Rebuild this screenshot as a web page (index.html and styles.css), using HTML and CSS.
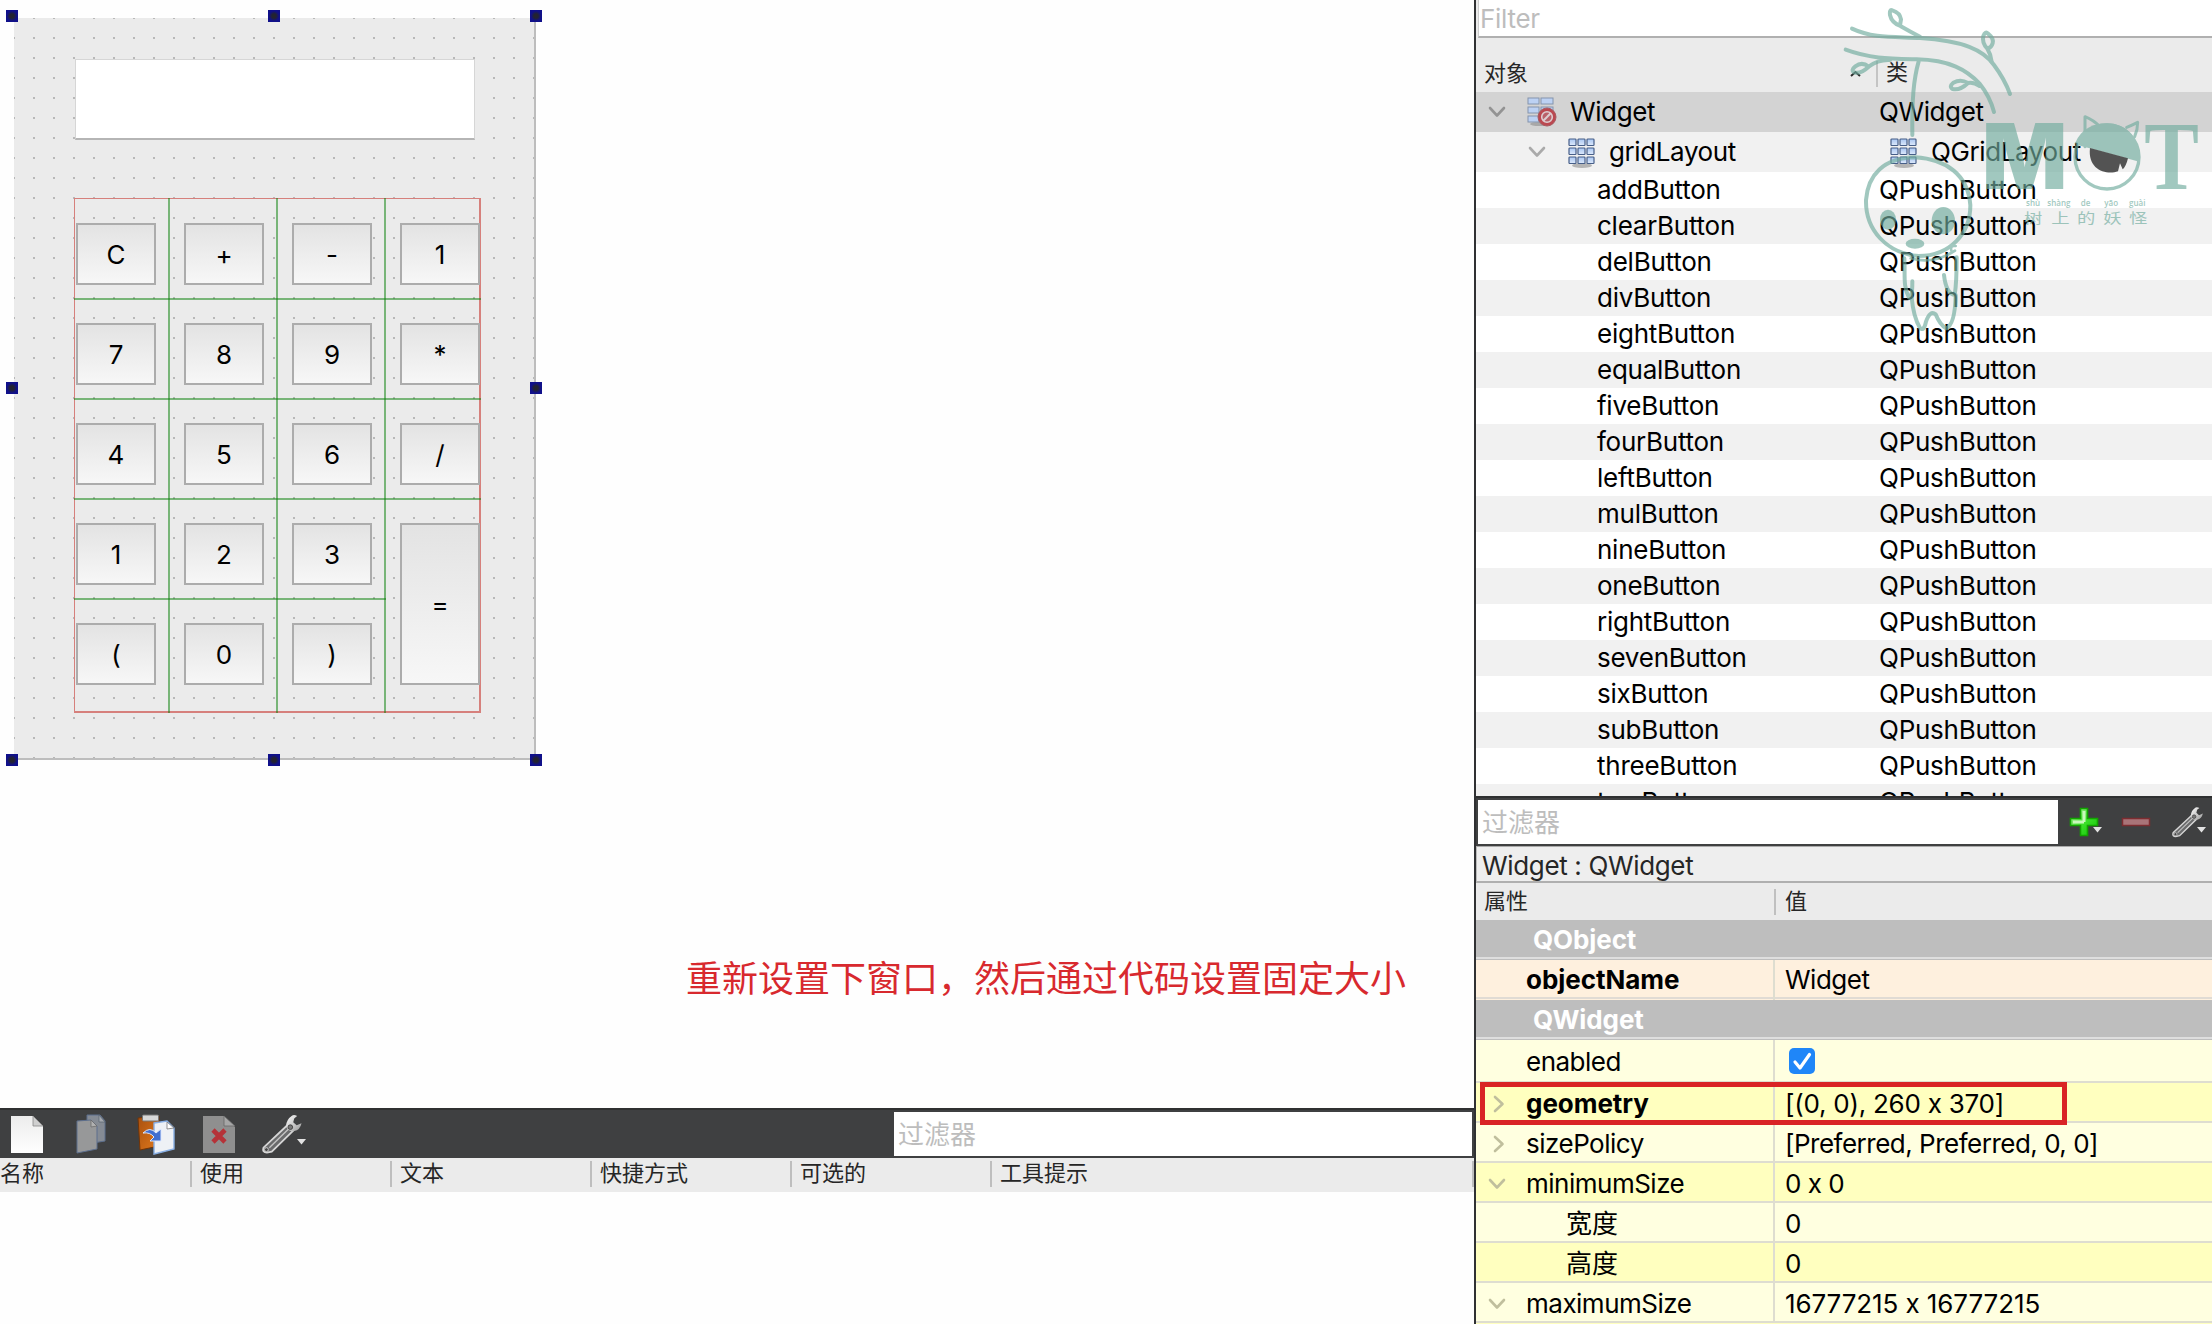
FILE: index.html
```html
<!DOCTYPE html>
<html lang="zh-CN">
<head>
<meta charset="utf-8">
<title>Qt Designer</title>
<link rel="stylesheet" href="styles.css">
</head>
<body>
<svg class="defs" width="0" height="0" aria-hidden="true">
  <defs>
    <linearGradient id="cell" x1="0" y1="0" x2="0" y2="1"><stop offset="0" stop-color="#a9c6f2"/><stop offset="1" stop-color="#dde9fa"/></linearGradient>
    <linearGradient id="steel" x1="0" y1="0" x2="1" y2="1"><stop offset="0" stop-color="#fff"/><stop offset="1" stop-color="#9a9a9a"/></linearGradient>
    <linearGradient id="paper" x1="0" y1="0" x2="0" y2="1"><stop offset="0" stop-color="#ececec"/><stop offset="1" stop-color="#fff"/></linearGradient>
    <linearGradient id="green" x1="0" y1="0" x2="1" y2="1"><stop offset="0" stop-color="#baf5a8"/><stop offset=".5" stop-color="#3fe02c"/><stop offset="1" stop-color="#0cc400"/></linearGradient>
    <linearGradient id="board" x1="0" y1="0" x2="1" y2="1"><stop offset="0" stop-color="#a8500f"/><stop offset="1" stop-color="#e0791c"/></linearGradient>
    <symbol id="grid" viewBox="0 0 28 31">
      <ellipse cx="14" cy="27.5" rx="10" ry="2.5" fill="#000" opacity=".25"/>
      <g fill="url(#cell)" stroke="#465e88" stroke-width="1.200">
        <rect x="1" y="1" width="7" height="6.5" rx=".8"/><rect x="10" y="1" width="7" height="6.5" rx=".8"/><rect x="19" y="1" width="7" height="6.5" rx=".8"/>
        <rect x="1" y="10" width="7" height="6.5" rx=".8"/><rect x="10" y="10" width="7" height="6.5" rx=".8"/><rect x="19" y="10" width="7" height="6.5" rx=".8"/>
        <rect x="1" y="19" width="7" height="6.5" rx=".8"/><rect x="10" y="19" width="7" height="6.5" rx=".8"/><rect x="19" y="19" width="7" height="6.5" rx=".8"/>
      </g>
    </symbol>
    <symbol id="down" viewBox="0 0 18 12"><path d="M2 2l7 7.5L16 2" fill="none" stroke="currentColor" stroke-width="2.6" stroke-linecap="round" stroke-linejoin="round"/></symbol>
    <symbol id="right" viewBox="0 0 12 18"><path d="M2 2l7.5 7L2 16" fill="none" stroke="currentColor" stroke-width="2.6" stroke-linecap="round" stroke-linejoin="round"/></symbol>
    <symbol id="wrench" viewBox="0 0 42 40">
      <path d="M27 10L1.500 34Q0 39 5 39L10 38L32 16.500Z" fill="#6a6b6c" stroke="#d6d6d6" stroke-width="1.8"/>
      <path d="M7.500 34L28.500 13.500" stroke="#c4c4c4" stroke-width="1.4"/>
      <path d="M31 1Q25 5 24.500 12Q27 18 33 17Q39 16 40.500 9L35.500 11L32 8L33 4L36 1.500Q33 0 31 1Z" fill="url(#steel)"/>
      <circle cx="29" cy="13" r="2.400" fill="#777" stroke="#333" stroke-width=".8"/><circle cx="4.500" cy="36" r="2" fill="#444" stroke="#ccc"/>
    </symbol>
  </defs>
</svg>
<div class="app">
  <main class="left">
    <section class="canvas">
      <div class="form">
        <div class="display"></div>
        <div class="keys">
          <i class="v v1"></i><i class="v v2"></i><i class="v v3"></i>
          <i class="h h1"></i><i class="h h2"></i><i class="h h3"></i><i class="h h4"></i>
          <button>C</button><button>+</button><button>-</button><button>1</button>
          <button>7</button><button>8</button><button>9</button><button>*</button>
          <button>4</button><button>5</button><button>6</button><button>/</button>
          <button>1</button><button>2</button><button>3</button><button class="tall">=</button>
          <button>(</button><button>0</button><button>)</button>
        </div>
      </div>
      <b class="handle x0 y0"></b><b class="handle x1 y0"></b><b class="handle x2 y0"></b>
      <b class="handle x0 y1"></b><b class="handle x2 y1"></b>
      <b class="handle x0 y2"></b><b class="handle x1 y2"></b><b class="handle x2 y2"></b>
      <p class="note">重新设置下窗口，然后通过代码设置固定大小</p>
    </section>
    <div class="toolbar">
      <svg class="tools" width="320" height="48" viewBox="0 0 320 48">
        <path d="M11 6H33L43 16V43H11Z" fill="url(#paper)"/><path d="M33 6V16H43Z" fill="#cfcfcf" stroke="#888" stroke-width=".8"/>
        <g><path d="M87 5H100L105 11V31L87 34Z" fill="#858b94" stroke="#5d6f8d"/><path d="M99 5V12H105Z" fill="#a5a9af" stroke="#5a6470" stroke-width=".7"/>
        <path d="M77 11L91 10L97 16V39L77 43Z" fill="#979899" stroke="#5d6f8d"/><path d="M91 10V17L97 16Z" fill="#b0b0b0" stroke="#666" stroke-width=".7"/></g>
        <g><path d="M138 8L159 6V36L140 40Z" fill="url(#board)" stroke="#713407"/><rect x="142.500" y="5" width="16" height="6" rx="1" fill="#d8d8d8" stroke="#777"/>
        <path d="M154 13L167 11L174 18V39L154 44Z" fill="#eef1f5" stroke="#88afe4" stroke-width="1.400"/><path d="M167 12V19L174 18Z" fill="#fff" stroke="#777" stroke-width=".8"/>
        <path d="M143 23Q150 16 156 23L161 19V31H150L154 27Q150 22 143 23Z" fill="#416fd0" stroke="#dce8ff" stroke-width="1"/></g>
        <path d="M203 6H224L235 17V43H203Z" fill="#8f8f8f"/><path d="M224 6V16H235Z" fill="#a6a6a6" stroke="#676767" stroke-width=".8"/>
        <path d="M213 20L225 32M225 20L213 32" stroke="#b53238" stroke-width="4.600"/>
        <use href="#wrench" x="262" y="4" width="41" height="40"/>
        <path d="M297 29H306L301.500 34.500Z" fill="#e2e2e2"/>
      </svg>
      <div class="search">过滤器</div>
    </div>
    <div class="cols"><span>名称</span><span>使用</span><span>文本</span><span>快捷方式</span><span>可选的</span><span>工具提示</span></div>
  </main>
  <aside class="right">
    <div class="filter">Filter</div>
    <div class="objhead"><span class="c1">对象<svg class="sort" width="11" height="7" viewBox="0 0 11 7"><path d="M1 6L5.500 2L10 6" fill="none" stroke="#2b2b2b" stroke-width="2"/></svg></span><span class="c2">类</span></div>
    <div class="tree">
      <div class="row big sel"><svg class="arrow a0" width="18" height="12"><use href="#down"/></svg>
        <svg class="wicon" width="30" height="32" viewBox="0 0 30 32"><ellipse cx="12" cy="28" rx="9" ry="2" fill="#000" opacity=".2"/><g fill="#bcd1f3" stroke="#8494ad"><rect x="1" y="2" width="11" height="6"/><rect x="14" y="2" width="12" height="6"/><rect x="1" y="11" width="11" height="6"/><rect x="1" y="20" width="11" height="6"/><rect x="14" y="11" width="12" height="6"/></g><circle cx="20" cy="21" r="9" fill="#bb4850" stroke="#a85a60"/><circle cx="20" cy="21" r="5.300" fill="#b96068" stroke="#dccdd0" stroke-width="1.600"/><path d="M16.300 24.700L23.700 17.300" stroke="#dccdd0" stroke-width="2"/></svg>
        <span class="n">Widget</span><span class="k">QWidget</span></div>
      <div class="row big"><svg class="arrow a1" width="18" height="12"><use href="#down"/></svg><svg class="gicon" width="28" height="31"><use href="#grid"/></svg><span class="n g">gridLayout</span><svg class="gicon2" width="28" height="31"><use href="#grid"/></svg><span class="k g">QGridLayout</span></div>
      <div class="row"><span class="n">addButton</span><span class="k">QPushButton</span></div>
      <div class="row"><span class="n">clearButton</span><span class="k">QPushButton</span></div>
      <div class="row"><span class="n">delButton</span><span class="k">QPushButton</span></div>
      <div class="row"><span class="n">divButton</span><span class="k">QPushButton</span></div>
      <div class="row"><span class="n">eightButton</span><span class="k">QPushButton</span></div>
      <div class="row"><span class="n">equalButton</span><span class="k">QPushButton</span></div>
      <div class="row"><span class="n">fiveButton</span><span class="k">QPushButton</span></div>
      <div class="row"><span class="n">fourButton</span><span class="k">QPushButton</span></div>
      <div class="row"><span class="n">leftButton</span><span class="k">QPushButton</span></div>
      <div class="row"><span class="n">mulButton</span><span class="k">QPushButton</span></div>
      <div class="row"><span class="n">nineButton</span><span class="k">QPushButton</span></div>
      <div class="row"><span class="n">oneButton</span><span class="k">QPushButton</span></div>
      <div class="row"><span class="n">rightButton</span><span class="k">QPushButton</span></div>
      <div class="row"><span class="n">sevenButton</span><span class="k">QPushButton</span></div>
      <div class="row"><span class="n">sixButton</span><span class="k">QPushButton</span></div>
      <div class="row"><span class="n">subButton</span><span class="k">QPushButton</span></div>
      <div class="row"><span class="n">threeButton</span><span class="k">QPushButton</span></div>
      <div class="row"><span class="n">twoButton</span><span class="k">QPushButton</span></div>
    </div>
    <div class="toolbar">
      <div class="search">过滤器</div>
      <svg class="tools" width="154" height="48" viewBox="0 0 154 48">
        <path d="M22.500 10.500H29.500V20.500H39.500V27.500H29.500V37.500H22.500V27.500H12.500V20.500H22.500Z" fill="url(#green)" stroke="#12a500" stroke-width="1.600"/>
        <path d="M26 13V24M15 24H26" stroke="#c9f8bb" stroke-width="3"/>
        <path d="M35 29H44L39.500 34.500Z" fill="#e2e2e2"/>
        <rect x="64.500" y="20.500" width="27" height="7" fill="#a97478" stroke="#7d2d31" stroke-width="1.500"/>
        <use href="#wrench" x="114" y="8" width="32" height="32"/>
        <path d="M139 29H148L143.500 34.500Z" fill="#e2e2e2"/>
      </svg>
    </div>
    <div class="title">Widget : QWidget</div>
    <div class="prophead"><span class="p">属性</span><span class="q">值</span></div>
    <div class="props">
      <div class="prop group">QObject</div>
      <div class="prop peach"><span class="p bold">objectName</span><span class="q">Widget</span></div>
      <div class="prop group">QWidget</div>
      <div class="prop light first"><span class="p">enabled</span><span class="q"><svg class="check" width="26" height="26" viewBox="0 0 26 26"><rect width="26" height="26" rx="5" fill="#1f86f8"/><path d="M6 14L11 20L20.500 6.500" fill="none" stroke="#fff" stroke-width="3.200" stroke-linecap="round" stroke-linejoin="round"/></svg></span></div>
      <div class="prop deep"><svg class="tw r" width="12" height="18"><use href="#right"/></svg><span class="p bold">geometry</span><span class="q rect">[(0, 0), 260 x 370]</span><div class="mark"></div></div>
      <div class="prop light"><svg class="tw r" width="12" height="18"><use href="#right"/></svg><span class="p">sizePolicy</span><span class="q">[Preferred, Preferred, 0, 0]</span></div>
      <div class="prop deep"><svg class="tw" width="18" height="12"><use href="#down"/></svg><span class="p">minimumSize</span><span class="q">0 x 0</span></div>
      <div class="prop light"><span class="p sub">宽度</span><span class="q">0</span></div>
      <div class="prop deep"><span class="p sub">高度</span><span class="q">0</span></div>
      <div class="prop light"><svg class="tw" width="18" height="12"><use href="#down"/></svg><span class="p">maximumSize</span><span class="q num">16777215 x 16777215</span></div>
      <div class="prop deep"></div>
    </div>
  </aside>
  <svg class="watermark" width="372" height="360" viewBox="0 0 1116 1080">
    <g fill="none" stroke="#70ac9e" stroke-width="12" stroke-linecap="round" stroke-linejoin="round">
      <path d="M36 86C100 116 160 110 240 114C370 122 430 150 462 195Q494 238 510 282"/>
      <path d="M17 149C90 176 150 176 230 178C330 180 380 210 418 250Q450 290 462 336"/>
      <path d="M240 110Q210 95 181 78Q155 68 150 45Q148 27 157 31Q180 38 183 58L180 76"/>
      <path d="M455 185Q452 162 442 146Q425 128 430 108Q436 92 444 101Q462 115 458 130Q454 144 443 146"/>
      <path d="M418 258Q402 246 384 249Q360 272 338 267Q326 260 340 248Q362 236 384 249"/>
      <path d="M150 180Q115 178 86 200Q60 224 42 217Q32 210 46 199Q66 184 86 200"/>
      <path d="M236 184C220 240 216 300 217 405"/>
      <path d="M225 472C130 474 84 525 78 600C76 690 140 760 236 768C330 768 392 700 391 615C384 525 320 478 225 472Z"/>
      <path d="M193 775C196 820 188 860 207 893Q217 900 217 844M215 892Q220 950 240 984Q252 995 258 965Q270 930 287 943Q300 975 318 985Q345 975 347 885M350 772Q350 850 344 885Q318 880 312 825"/>
      <path d="M212 775Q280 795 345 752M347 738Q330 735 334 752" stroke-width="8"/>
      <path d="M735 440L735 350Q760 360 780 380M860 382Q875 376 893 367Q893 390 884 410" stroke-width="9"/>
      <circle cx="801" cy="471" r="96" stroke-width="10"/>
    </g>
    <g fill="#70ac9e">
      <ellipse cx="144" cy="659" rx="24" ry="30"/><ellipse cx="310" cy="662" rx="35" ry="41"/><ellipse cx="225" cy="731" rx="28" ry="15"/>
      <path d="M705 430C725 385 760 370 801 370C862 370 904 420 898 485L710 434Z"/>
      <text class="logo" x="426" y="568" font-size="274" textLength="256" lengthAdjust="spacingAndGlyphs">M</text>
      <text class="logo serif" x="913" y="568" font-size="294" textLength="164" lengthAdjust="spacingAndGlyphs">T</text>
      <g class="py"><text x="558" y="618">shù</text><text x="622" y="618">shàng</text><text x="722" y="618">de</text><text x="793" y="618">yāo</text><text x="867" y="618">guài</text></g>
      <g class="hz" transform="translate(0 668) scale(1 .76)"><text x="552">树</text><text x="634">上</text><text x="711">的</text><text x="790">妖</text><text x="867">怪</text></g>
    </g>
    <path d="M750 444L864 475Q858 500 848 508L840 490L834 514C800 526 742 510 750 444Z" fill="#000"/>
  </svg>
</div>
</body>
</html>
```
FILE: styles.css
```css
* { box-sizing: border-box; }
body { margin: 0; background: #fefefe; overflow: hidden; font: 26px/36px Inter, "Noto Sans CJK SC", sans-serif; font-feature-settings: "calt" 0; letter-spacing: -.5px; color: #000; }
.defs { display: block; width: 0; height: 0; }
.app { position: relative; width: 2212px; height: 1324px; display: grid; grid-template-columns: 1474px 738px; overflow: hidden; }

/* design canvas */
.left { display: flex; flex-direction: column; min-width: 0; }
.canvas { position: relative; height: 1108px; }
.form { position: absolute; left: 14px; top: 18px; width: 522px; height: 742px; padding: 41px 0 0 60px; border: solid #bdbdbd; border-width: 0 2px 2px 0; background-color: #ebebeb; background-image: conic-gradient(from 270deg at 2px 2px, #b8b8b8 90deg, transparent 0); background-size: 20px 20px; background-position: -1px -1px; }
.display { width: 400px; height: 81px; margin-left: 1px; border: 1px solid #d6d6d6; border-bottom: 2px solid #b5b5b5; background: #fff; }
.keys { position: relative; width: 407px; height: 515px; margin-top: 58px; padding: 24px 0 0 1px; border: 1px solid #d6807c; border-right-width: 2px; border-bottom-width: 2px; display: grid; grid-template-columns: repeat(4, 80px); grid-auto-rows: 62px; gap: 38px 28px; }
.keys button { position: relative; border: 2px solid #acacac; background: linear-gradient(#e3e3e3, #f7f7f7); font: inherit; color: #000; padding: 2px 0 0; text-align: center; letter-spacing: 0; }
.keys .tall { grid-row: 4 / 6; grid-column: 4; height: 162px; }
.v, .h { position: absolute; background: rgba(5, 128, 5, .5); }
.v { width: 2px; top: -1px; height: 515px; }
.h { height: 2px; left: -1px; width: 407px; }
.v1 { left: 93px; } .v2 { left: 201px; } .v3 { left: 309px; }
.h1 { top: 99px; } .h2 { top: 199px; } .h3 { top: 299px; } .h4 { top: 399px; width: 312px; }
.handle { position: absolute; width: 12px; height: 12px; background: radial-gradient(#232330 25%, #10108a 60%); }
.x0 { left: 6px; } .x1 { left: 268px; } .x2 { left: 530px; }
.y0 { top: 10px; } .y1 { top: 382px; } .y2 { top: 754px; }
.note { position: absolute; left: 686px; top: 951px; margin: 0; font: 36px/50px "Noto Sans CJK SC", sans-serif; letter-spacing: 0; color: #d8292e; white-space: nowrap; }

/* toolbars and action list */
.toolbar { height: 50px; flex: none; background: #3f4041; border-top: 2px solid #2f3031; display: flex; align-items: center; justify-content: space-between; }
.tools { flex: none; display: block; }
.search { height: 44px; background: #fff; color: #bdbdbd; line-height: 46px; padding-left: 4px; letter-spacing: 0; }
.left .search { width: 578px; margin-right: 2px; }
.cols { height: 34px; background: #ebebeb; display: flex; font-size: 22px; line-height: 31px; letter-spacing: 0; color: #262626; }
.cols span { position: relative; width: 200px; padding-left: 8px; }
.cols span:first-child { width: 192px; padding-left: 0; }
.cols span:last-child { width: 482px; }
.cols span::after { content: ""; position: absolute; right: 0; top: 3px; width: 2px; height: 26px; background: #bebebe; }

/* object inspector */
.right { border-left: 2px solid #303133; display: flex; flex-direction: column; min-width: 0; background: #ebebeb; }
.right > * { flex: none; }
.filter { height: 38px; margin-left: 2px; background: #fff; border-bottom: 2px solid #b0b0b0; border-left: 1px solid #ccc; color: #bdbdbd; line-height: 38px; padding-left: 1px; letter-spacing: -.3px; }
.objhead { height: 54px; padding-top: 16px; display: flex; font-size: 22px; line-height: 36px; letter-spacing: 0; color: #262626; }
.c1 { position: relative; width: 402px; padding-left: 8px; display: flex; justify-content: space-between; align-items: center; padding-right: 17px; }
.c1::after { content: ""; position: absolute; right: 0; top: 7px; width: 2px; height: 26px; background: #c4c4c4; }
.c2 { padding-left: 8px; }
.tree { height: 704px; overflow: hidden; background: #fff; letter-spacing: -.25px; }
.row { position: relative; height: 36px; line-height: 36px; display: grid; grid-template-columns: 403px 1fr; }
.row:nth-child(even) { background: #f1f1f1; }
.row.big { height: 40px; line-height: 40px; letter-spacing: -.4px; }
.row.sel { background: #d3d3d3; }
.n { padding-left: 121px; }
.big .n { padding-left: 94px; }
.big .n.g { padding-left: 133px; }
.k.g { padding-left: 52px; }
.arrow, .wicon, .gicon, .gicon2 { position: absolute; }
.arrow { color: #aaa; top: 14px; }
.a0 { left: 12px; color: #939393; } .a1 { left: 52px; }
.wicon { left: 51px; top: 4px; }
.gicon { left: 92px; top: 6px; }
.gicon2 { left: 414px; top: 6px; }

/* property editor */
.right .search { width: 580px; margin-left: 2px; padding-left: 4px; }
.title { height: 37px; background: #eee; border-top: 1px solid #aaa; border-bottom: 2px solid #afafaf; border-left: 1px solid #bbb; padding-left: 5px; line-height: 38px; color: #262626; letter-spacing: -.35px; }
.prophead { height: 37px; display: flex; font-size: 22px; line-height: 37px; letter-spacing: 0; color: #262626; }
.prophead .p { position: relative; padding-left: 8px; width: 300px; }
.prophead .p::after { content: ""; position: absolute; right: 0; top: 6px; width: 2px; height: 26px; background: #c0c0c0; }
.prophead .q { padding-left: 9px; }
.prop { position: relative; height: 40px; line-height: 42px; display: flex; box-shadow: inset 0 -2px #deddd0; }
.prop.first { height: 43px; line-height: 43px; }
.prop.group { background: #bebebe; color: #fff; font-weight: 700; padding-left: 57px; line-height: 40px; letter-spacing: -.1px; box-shadow: inset 0 -1px #bebebe, inset 0 -3px #dedede; }
.prop.peach { background: #fef0de; line-height: 40px; box-shadow: inset 0 -1px #fef0de, inset 0 -3px #e0dbd4; }
.light { background: #ffffe0; } .deep { background: #ffffbf; }
.prop .p { width: 299px; padding-left: 50px; border-right: 2px solid #deddd0; }
.prop .q { padding-left: 10px; }
.prop .rect { letter-spacing: -.25px; }
.prop .num { letter-spacing: -.1px; }
.prop .sub { padding-left: 90px; letter-spacing: 0; }
.prop .bold { font-weight: 700; letter-spacing: -.05px; }
.check { display: block; margin: 8px 0 0 4px; }
.tw { position: absolute; left: 12px; top: 15px; color: #c0bf9d; }
.tw.r { left: 17px; top: 12px; }
.mark { position: absolute; z-index: 2; left: 4px; top: -1px; width: 587px; height: 43px; border: 5px solid #d92325; }

/* watermark */
.watermark { position: absolute; left: 1840px; top: 0; opacity: .65; letter-spacing: 0; }
.logo { font-family: Inter, sans-serif; font-weight: 900; }
.logo.serif { font-family: "Liberation Serif", serif; font-weight: 700; }
.py { font: 600 24px "Open Sans", sans-serif; }
.hz { font: 55px "Noto Sans CJK SC", sans-serif; }
```
